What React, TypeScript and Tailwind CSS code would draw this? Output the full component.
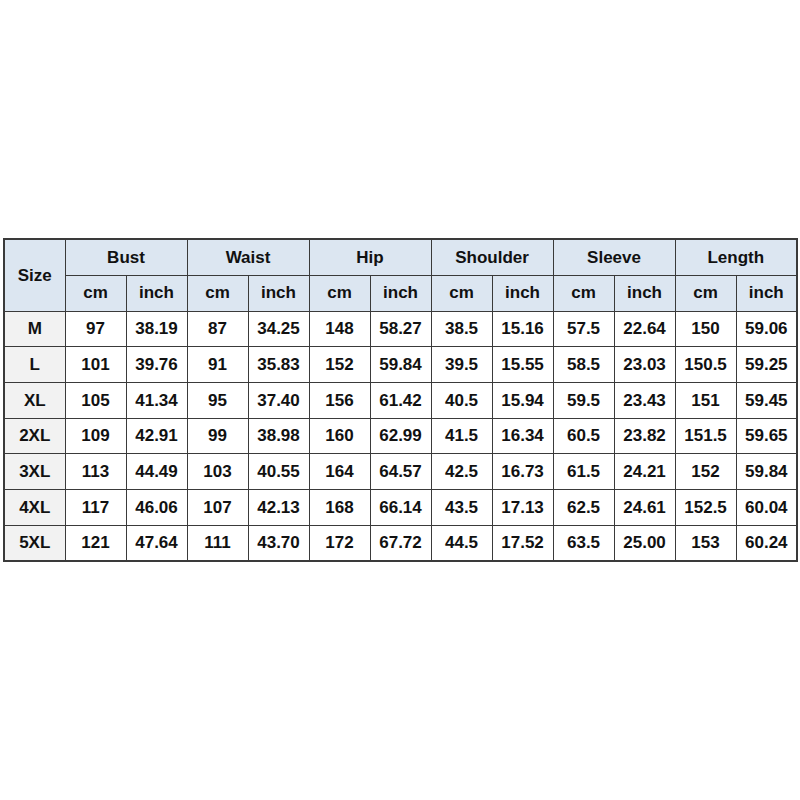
import { Fragment } from "react";

const groups = ["Bust", "Waist", "Hip", "Shoulder", "Sleeve", "Length"];

const rows: string[][] = [
  ["M", "97", "38.19", "87", "34.25", "148", "58.27", "38.5", "15.16", "57.5", "22.64", "150", "59.06"],
  ["L", "101", "39.76", "91", "35.83", "152", "59.84", "39.5", "15.55", "58.5", "23.03", "150.5", "59.25"],
  ["XL", "105", "41.34", "95", "37.40", "156", "61.42", "40.5", "15.94", "59.5", "23.43", "151", "59.45"],
  ["2XL", "109", "42.91", "99", "38.98", "160", "62.99", "41.5", "16.34", "60.5", "23.82", "151.5", "59.65"],
  ["3XL", "113", "44.49", "103", "40.55", "164", "64.57", "42.5", "16.73", "61.5", "24.21", "152", "59.84"],
  ["4XL", "117", "46.06", "107", "42.13", "168", "66.14", "43.5", "17.13", "62.5", "24.61", "152.5", "60.04"],
  ["5XL", "121", "47.64", "111", "43.70", "172", "67.72", "44.5", "17.52", "63.5", "25.00", "153", "60.24"],
];

const cell = "border border-[#3a3a3a] text-center align-middle p-0";

export default function App() {
  return (
    <div
      className="flex h-[800px] w-[800px] items-center bg-white pl-[3px] text-[17px] font-bold text-[#111]"
      style={{ fontFamily: '"Liberation Sans", Arial, sans-serif' }}
    >
      <table className="w-[794px] table-fixed border-collapse border-2 border-[#3a3a3a]">
        <colgroup>
          <col className="w-[61px]" />
          {Array.from({ length: 12 }).map((_, i) => (
            <col key={i} className="w-[61px]" />
          ))}
        </colgroup>
        <thead>
          <tr className="h-[36px] bg-[#dce6f1]">
            <th rowSpan={2} className={cell}>
              Size
            </th>
            {groups.map((g) => (
              <th key={g} colSpan={2} className={cell}>
                {g}
              </th>
            ))}
          </tr>
          <tr className="h-[36px] bg-[#dce6f1]">
            {groups.map((g) => (
              <Fragment key={g}>
                <th className={cell}>cm</th>
                <th className={cell}>inch</th>
              </Fragment>
            ))}
          </tr>
        </thead>
        <tbody>
          {rows.map((r) => (
            <tr key={r[0]} className="h-[35.7px]">
              {r.map((v, i) => (
                <td key={i} className={`${cell} ${i === 0 ? "bg-[#f2f2f2]" : "bg-white"}`}>
                  {v}
                </td>
              ))}
            </tr>
          ))}
        </tbody>
      </table>
    </div>
  );
}
